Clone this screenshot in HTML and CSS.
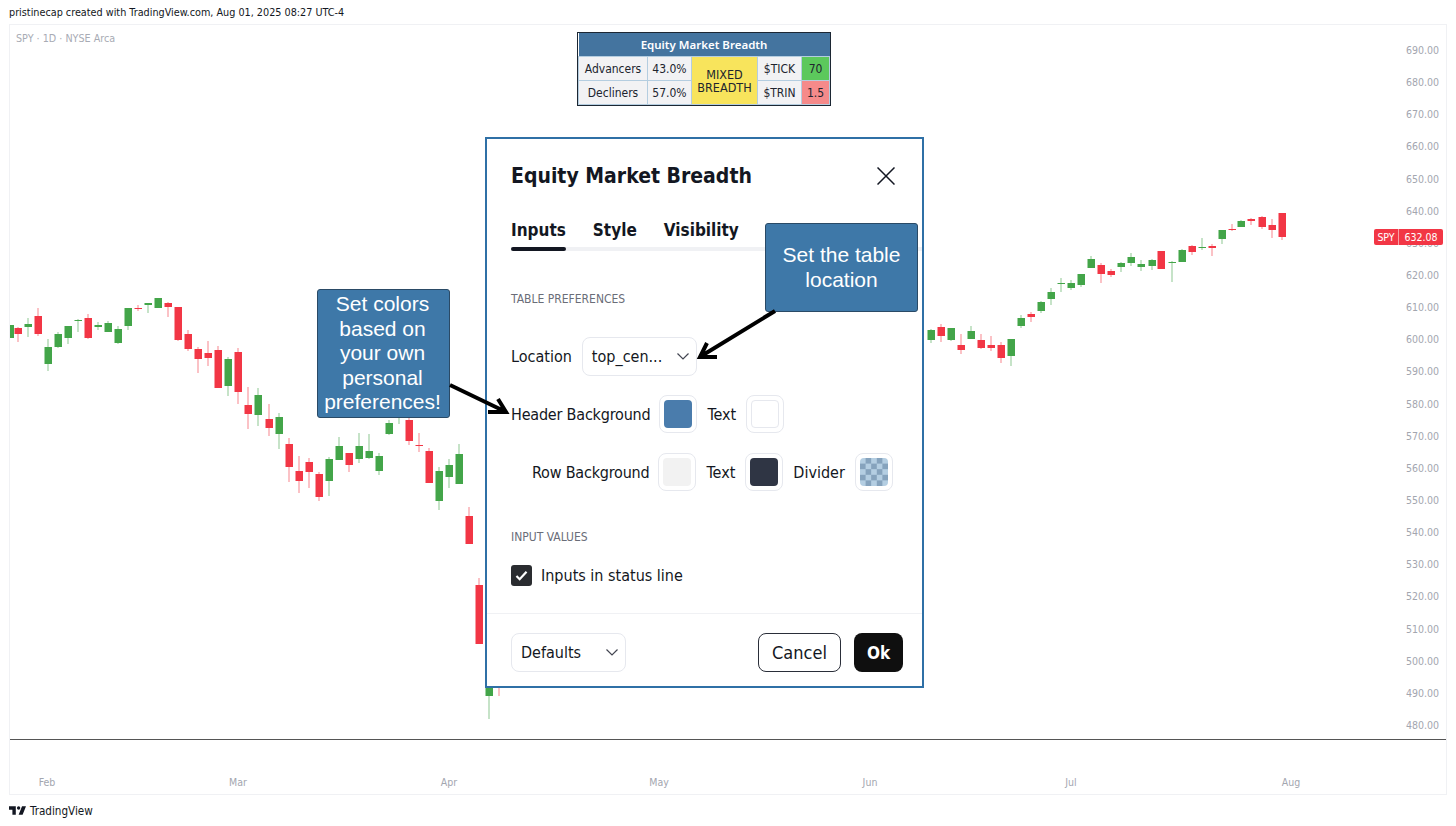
FILE: index.html
```html
<!DOCTYPE html>
<html lang="en">
<head>
    <meta charset="UTF-8">
    <title>Equity Market Breadth - SPY</title>
    <link rel="stylesheet" href="styles.css">
</head>
<body>

<div class="page">
    <div class="top-bar">pristinecap created with TradingView.com, Aug 01, 2025 08:27 UTC-4</div>

    <div class="chart-frame">
        <svg id="chart" class="chart" viewBox="10 25 1436 769"></svg>
        <div class="symbol-line">SPY · 1D · NYSE Arca</div>
        <div class="price-tag"><span class="price-tag-name">SPY</span><span class="price-tag-value">632.08</span></div>
    </div>

    <div class="footer">
        <svg class="footer-logo" viewBox="2 6 30 15" width="17" height="9"><path d="M14 6H2v6h6v9h6V6Zm12 15h-7l6-15h7l-6 15Zm-7-9a3 3 0 1 0 0-6 3 3 0 0 0 0 6Z"/></svg>
        <span>TradingView</span>
    </div>

    <table class="breadth">
        <colgroup>
            <col class="col-name">
            <col class="col-pct">
            <col class="col-mixed">
            <col class="col-label">
            <col class="col-value">
        </colgroup>
        <tr><th colspan="5">Equity Market Breadth</th></tr>
        <tr>
            <td>Advancers</td>
            <td>43.0%</td>
            <td rowspan="2" class="mixed">MIXED<br>BREADTH</td>
            <td>$TICK</td>
            <td class="tick">70</td>
        </tr>
        <tr>
            <td>Decliners</td>
            <td>57.0%</td>
            <td>$TRIN</td>
            <td class="trin">1.5</td>
        </tr>
    </table>

    <div class="dialog">
        <div class="dialog-header">
            <h2>Equity Market Breadth</h2>
            <svg class="close-icon" viewBox="0 0 18 18" width="18" height="18"><path d="M0.5 0.5l17 17M17.5 0.5l-17 17"/></svg>
        </div>
        <div class="tabs">
            <span class="tab active">Inputs</span>
            <span class="tab">Style</span>
            <span class="tab">Visibility</span>
        </div>

        <div class="section-title first">TABLE PREFERENCES</div>
        <div class="row location-row">
            <span>Location</span>
            <div class="select location-select">top_cen...
                <svg class="chevron" viewBox="0 0 12 7" width="12" height="7"><path d="M0.5 0.5l5.5 5.5 5.5-5.5"/></svg>
            </div>
        </div>
        <div class="row header-row">
            <span class="tight">Header Background</span>
            <div class="swatch"><div class="swatch-fill fill-header"></div></div>
            <span class="after-swatch">Text</span>
            <div class="swatch"><div class="swatch-fill fill-white"></div></div>
        </div>
        <div class="row row-row">
            <span class="tight">Row Background</span>
            <div class="swatch"><div class="swatch-fill fill-row"></div></div>
            <span class="after-swatch">Text</span>
            <div class="swatch"><div class="swatch-fill fill-dark"></div></div>
            <span class="after-swatch">Divider</span>
            <div class="swatch"><div class="swatch-fill fill-check"></div></div>
        </div>

        <div class="section-title second">INPUT VALUES</div>
        <div class="check-row">
            <div class="checkbox">
                <svg viewBox="0 0 14 12" width="13" height="11"><path d="M1.5 6.5l3.5 3.5 7.5-8"/></svg>
            </div>
            <span>Inputs in status line</span>
        </div>

        <div class="dialog-footer">
            <div class="select defaults-select">Defaults
                <svg class="chevron" viewBox="0 0 12 7" width="12" height="7"><path d="M0.5 0.5l5.5 5.5 5.5-5.5"/></svg>
            </div>
            <button class="btn btn-cancel">Cancel</button>
            <button class="btn btn-ok">Ok</button>
        </div>
    </div>

    <div class="callout callout-colors">Set colors based on your own personal preferences!</div>
    <div class="callout callout-location">Set the table location</div>

    <svg class="arrows" viewBox="0 0 1456 826">
        <path d="M450 385L504 411M488 412L506 412L498 399"/>
        <path d="M775 311L703 355M717 357L700 357L707 343"/>
    </svg>
</div>

<script>
    // x, wick top, wick bottom, body top, body bottom (page pixels)
    const up = [
        [10, 325, 338, 325, 338], [28, 318, 337, 324, 327], [48, 339, 371, 347, 364],
        [58, 332, 348, 334, 347], [68, 326, 344, 326, 338], [78, 319, 332, 320, 321],
        [98, 322, 330, 325, 327], [108, 321, 332, 323, 332], [118, 326, 344, 329, 343],
        [128, 308, 330, 308, 326], [148, 303, 313, 303, 305], [158, 298, 308, 298, 308],
        [228, 357, 396, 359, 386], [258, 388, 426, 395, 415], [279, 413, 449, 417, 434],
        [329, 457, 496, 459, 481], [339, 437, 460, 446, 460], [359, 433, 463, 446, 459],
        [369, 434, 459, 451, 458], [379, 453, 475, 456, 471], [389, 420, 435, 423, 434],
        [399, 400, 424, 400, 417], [439, 467, 510, 471, 501], [449, 459, 488, 465, 477],
        [459, 444, 484, 454, 484], [489, 687, 719, 687, 696],
        [931, 329, 343, 330, 340], [951, 328, 341, 328, 340], [971, 326, 339, 331, 339],
        [1011, 339, 366, 339, 356], [1021, 315, 328, 318, 326], [1041, 301, 313, 302, 311],
        [1051, 288, 305, 292, 299], [1061, 278, 292, 283, 284], [1071, 280, 290, 283, 288],
        [1081, 274, 287, 274, 285], [1091, 256, 268, 259, 268], [1121, 262, 272, 263, 267],
        [1131, 253, 266, 257, 263], [1141, 260, 271, 264, 267], [1152, 259, 270, 260, 266],
        [1172, 261, 282, 262, 263], [1182, 249, 262, 250, 262], [1202, 238, 250, 247, 248],
        [1222, 230, 244, 230, 239], [1241, 220, 227, 221, 227]
    ];
    const down = [
        [18, 327, 342, 328, 334], [38, 308, 336, 316, 334], [88, 314, 339, 318, 338],
        [138, 305, 311, 308, 309], [168, 302, 317, 303, 307], [178, 307, 341, 307, 340],
        [188, 330, 351, 334, 349], [198, 347, 373, 349, 359], [208, 341, 366, 353, 358],
        [218, 346, 388, 350, 388], [238, 348, 404, 352, 392], [248, 387, 429, 405, 414],
        [269, 404, 436, 419, 428], [289, 438, 482, 444, 467], [299, 456, 493, 471, 481],
        [309, 458, 488, 462, 472], [319, 472, 501, 474, 497], [349, 453, 472, 453, 465],
        [409, 415, 445, 420, 441], [419, 433, 452, 445, 446], [429, 448, 483, 451, 483],
        [469, 507, 544, 516, 544], [479, 578, 644, 585, 644], [499, 687, 696, 687, 688],
        [941, 324, 342, 327, 336], [961, 334, 354, 345, 350], [981, 334, 349, 340, 348],
        [991, 336, 351, 345, 348], [1001, 342, 363, 345, 358], [1031, 312, 322, 314, 317],
        [1101, 263, 283, 265, 274], [1111, 269, 277, 271, 275], [1161, 251, 269, 251, 269],
        [1192, 245, 255, 246, 252], [1212, 244, 256, 246, 248], [1232, 224, 231, 229, 230],
        [1251, 218, 225, 219, 221], [1262, 216, 229, 217, 227], [1272, 219, 238, 225, 230],
        [1282, 213, 240, 213, 237]
    ];
    const months = [['Feb', 47], ['Mar', 238], ['Apr', 449], ['May', 659], ['Jun', 870], ['Jul', 1071], ['Aug', 1291]];

    const chart = document.getElementById('chart');
    let markup = '';

    function addCandles(candles, className) {
        candles.forEach(([x, wickTop, wickBottom, bodyTop, bodyBottom]) => {
            markup += `<rect class="${className}" x="${x - 0.5}" y="${wickTop}" width="1" height="${wickBottom - wickTop}" opacity="0.6"/>`;
            markup += `<rect class="${className}" x="${x - 3.5}" y="${bodyTop}" width="7.5" height="${bodyBottom - bodyTop}"/>`;
        });
    }

    addCandles(up, 'candle-up');
    addCandles(down, 'candle-down');

    // price scale: 690 down to 480, every 10
    for (let i = 0; i <= 21; i++) {
        const price = (690 - i * 10).toFixed(2);
        markup += `<text class="axis-text" x="1439" y="${54 + i * 32.14}" text-anchor="end">${price}</text>`;
    }

    months.forEach(([name, x]) => {
        markup += `<text class="axis-text" x="${x}" y="786" text-anchor="middle">${name}</text>`;
    });

    markup += '<line class="time-line" x1="10" y1="739.5" x2="1446" y2="739.5"/>';
    chart.innerHTML = markup;
</script>

</body>
</html>
```

FILE: styles.css
```css
* {
    box-sizing: border-box;
}
body {
    margin: 0;
    background: #ffffff;
    font-family: "DejaVu Sans Condensed", "DejaVu Sans", sans-serif;
    color: #131722;
}
.page {
    position: relative;
    width: 1456px;
    height: 826px;
    overflow: hidden;
}
.top-bar {
    height: 24px;
    padding: 5px 0 0 9px;
    font-size: 10.75px;
    line-height: 16px;
    color: #131722;
}
.chart-frame {
    position: relative;
    width: 1438px;
    height: 771px;
    margin-left: 9px;
    border: 1px solid #f0f1f4;
}
.chart {
    display: block;
    width: 1436px;
    height: 769px;
}
.candle-up {
    fill: #43a549;
}
.candle-down {
    fill: #f23645;
}
.axis-text {
    font-size: 10.5px;
    fill: #a3a6af;
}
.time-line {
    stroke: #555555;
    stroke-width: 1;
}
.symbol-line {
    position: absolute;
    left: 6px;
    top: 6px;
    font-size: 10.7px;
    line-height: 15px;
    color: #a8abb4;
}
.price-tag {
    position: absolute;
    left: 1364px;
    top: 204px;
    display: flex;
    height: 16px;
    font-size: 10.5px;
    line-height: 16px;
    color: #ffffff;
    border-radius: 2px;
    overflow: hidden;
}
.price-tag-name {
    width: 25px;
    text-align: center;
    background: #f23645;
    border-right: 1px solid #f9a0a8;
}
.price-tag-value {
    width: 44px;
    text-align: center;
    background: #f23645;
}
.footer {
    display: flex;
    align-items: center;
    gap: 4px;
    height: 31px;
    padding-left: 9px;
    font-size: 11.6px;
    color: #131722;
}
.footer-logo {
    fill: #131722;
}

/* table drawn on the chart */
.breadth {
    position: absolute;
    left: 578px;
    top: 33px;
    width: 252px;
    height: 71px;
    border-collapse: collapse;
    table-layout: fixed;
    outline: 1px solid #1c2733;
    font-size: 12px;
    line-height: 13px;
    color: #20242e;
}
.col-name {
    width: 69px;
}
.col-pct {
    width: 44px;
}
.col-mixed {
    width: 66px;
}
.col-label {
    width: 44px;
}
.breadth th {
    height: 23px;
    padding: 0;
    background: #44749f;
    color: #ffffff;
    font-family: "Noto Sans", sans-serif;
    font-size: 11.5px;
    font-weight: 600;
}
.breadth td {
    height: 24px;
    padding: 2px 0 0;
    text-align: center;
    background: #f2f2f4;
    border: 1px solid #b4cde0;
}
.breadth td.mixed {
    background: #f8e45c;
    font-size: 12.5px;
}
.breadth td.tick {
    background: #5cc85c;
}
.breadth td.trin {
    background: #f58a8a;
}

/* settings dialog */
.dialog {
    position: absolute;
    left: 485px;
    top: 137px;
    width: 439px;
    height: 551px;
    background: #ffffff;
    border: 2px solid #2f70a6;
    font-size: 16px;
    color: #131722;
}
.dialog-header {
    display: flex;
    align-items: center;
    justify-content: space-between;
    height: 74px;
    padding: 0 27px 0 24px;
}
.dialog-header h2 {
    margin: 0;
    font-size: 21px;
    font-weight: bold;
}
.close-icon path {
    fill: none;
    stroke: #131722;
    stroke-width: 1.5;
}
.tabs {
    display: flex;
    gap: 27px;
    height: 38px;
    margin-left: 24px;
    border-bottom: 4px solid #f0f1f4;
}
.tab {
    position: relative;
    font-size: 17px;
    line-height: 34px;
    font-weight: bold;
}
.tab.active::after {
    content: "";
    position: absolute;
    left: 0;
    right: 0;
    bottom: -4px;
    height: 4px;
    border-radius: 2px;
    background: #131722;
}
.section-title {
    margin-left: 24px;
    font-size: 12px;
    line-height: 16px;
    color: #6a6d78;
}
.section-title.first {
    margin-top: 40px;
}
.section-title.second {
    margin-top: 38px;
}
.row {
    display: flex;
    align-items: center;
    margin-left: 24px;
}
.tight {
    letter-spacing: -0.2px;
}
.location-row {
    gap: 10px;
    margin-top: 30px;
}
.header-row {
    gap: 9px;
    margin-top: 19px;
}
.row-row {
    gap: 9px;
    margin-top: 20px;
    margin-left: 45px;
}
.select {
    display: flex;
    align-items: center;
    justify-content: space-between;
    width: 115px;
    height: 39px;
    padding: 0 7px 0 9px;
    border: 1px solid #e6e8ee;
    border-radius: 8px;
}
.chevron path {
    fill: none;
    stroke: #434651;
    stroke-width: 1.2;
}
.swatch {
    width: 38px;
    height: 38px;
    padding: 4px;
    border: 1px solid #e6e8ee;
    border-radius: 8px;
}
.swatch-fill {
    width: 28px;
    height: 28px;
    border-radius: 4px;
}
.fill-header {
    background: #4a7cac;
}
.fill-white {
    background: #ffffff;
    border: 1px solid #e6e8ee;
}
.fill-row {
    background: #f2f2f2;
}
.fill-dark {
    background: #2f3544;
}
.fill-check {
    background: repeating-conic-gradient(#86a3bd 0 25%, #b4cee2 0 50%) 0 0 / 11.2px 11.2px;
}
.after-swatch {
    margin: 0 1px;
}
.check-row {
    display: flex;
    align-items: center;
    gap: 9px;
    margin: 20px 0 0 24px;
}
.checkbox {
    display: flex;
    align-items: center;
    justify-content: center;
    width: 21px;
    height: 21px;
    border-radius: 3px;
    background: #2a2c30;
}
.checkbox path {
    fill: none;
    stroke: #ffffff;
    stroke-width: 2.4;
}
.dialog-footer {
    display: flex;
    align-items: center;
    margin-top: 27px;
    padding: 19px 19px 0 24px;
    border-top: 1px solid #f0f1f4;
}
.defaults-select {
    margin-right: auto;
}
.btn {
    height: 39px;
    padding: 0;
    border-radius: 8px;
    font-family: "DejaVu Sans Condensed", "DejaVu Sans", sans-serif;
    font-size: 18px;
}
.btn-cancel {
    width: 83px;
    margin-right: 13px;
    background: #ffffff;
    border: 1px solid #2a2e39;
    color: #131722;
}
.btn-ok {
    width: 49px;
    background: #0f0f0f;
    border: none;
    color: #ffffff;
    font-size: 17px;
    font-weight: bold;
}

/* annotations */
.callout {
    position: absolute;
    display: flex;
    align-items: center;
    justify-content: center;
    text-align: center;
    background: #3e78a8;
    border: 1px solid #2a4a66;
    border-radius: 3px;
    color: #ffffff;
    font-family: "Liberation Sans", Arial, sans-serif;
    font-size: 21px;
    line-height: 24.5px;
}
.callout-colors {
    left: 317px;
    top: 289px;
    width: 133px;
    height: 129px;
    padding: 0 5px 0 3px;
}
.callout-location {
    left: 765px;
    top: 223px;
    width: 153px;
    height: 89px;
    padding: 0 10px;
}
.arrows {
    position: absolute;
    left: 0;
    top: 0;
    width: 1456px;
    height: 826px;
    pointer-events: none;
}
.arrows path {
    fill: none;
    stroke: #000000;
    stroke-width: 4;
}
```
